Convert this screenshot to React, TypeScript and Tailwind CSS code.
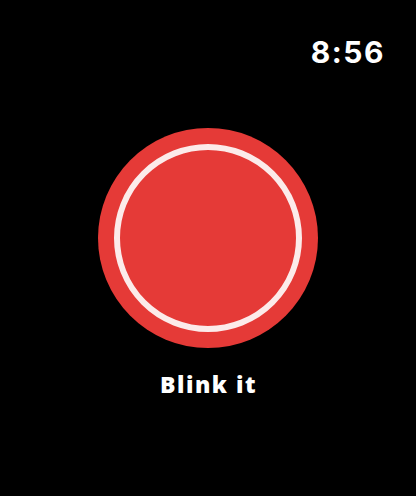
import React from "react";

const App: React.FC = () => {
  return (
    <div
      className="w-[416px] h-[496px] bg-black flex flex-col text-white"
      style={{ fontFamily: "'Open Sans', Inter, sans-serif" }}
    >
      <div className="flex justify-end pt-[37px] pr-[31px]">
        <span className="font-['Inter'] text-[30px] font-bold leading-none tracking-[1.5px]">8:56</span>
      </div>

      <div className="mt-[61px] flex justify-center">
        <button className="w-[220px] h-[220px] rounded-full bg-[#e53a37] flex items-center justify-center">
          <div className="w-[188px] h-[188px] rounded-full border-[6px] border-[#fcebea]" />
        </button>
      </div>

      <div className="mt-[25px] flex justify-center pl-[1px]">
        <span className="text-[23px] font-extrabold leading-none tracking-[1.5px]">Blink it</span>
      </div>
    </div>
  );
};

export default App;
